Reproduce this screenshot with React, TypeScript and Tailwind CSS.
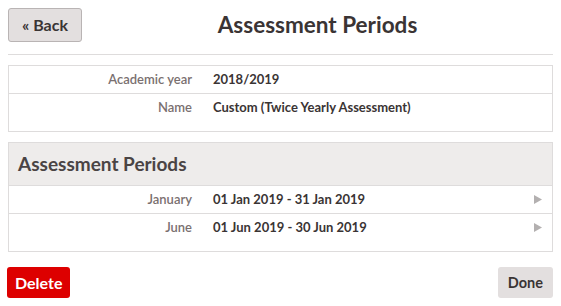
import type { ReactNode } from 'react';

type Row = { label: string; value: string; link?: boolean };

const details: Row[] = [
  { label: 'Academic year', value: '2018/2019' },
  { label: 'Name', value: 'Custom (Twice Yearly Assessment)' },
];

const periods: Row[] = [
  { label: 'January', value: '01 Jan 2019 - 31 Jan 2019', link: true },
  { label: 'June', value: '01 Jun 2019 - 30 Jun 2019', link: true },
];

function Arrow() {
  return (
    <svg width="8" height="9" viewBox="0 0 8 9" className="shrink-0">
      <path d="M0 0 L8 4.5 L0 9 Z" fill="#b3b0b0" />
    </svg>
  );
}

function DataRow({ row, last }: { row: Row; last?: boolean }) {
  return (
    <div
      className={`flex items-start pr-[10px] ${last ? 'h-[37px]' : 'h-[28px] border-b border-[#dedcdc]'}`}
    >
      <div className="w-[183px] shrink-0 pt-[4px] text-right text-[13px] font-semibold text-[#7a7070]">
        {row.label}
      </div>
      <div className="flex-1 pl-[21px] pt-[4px] text-[13px] font-bold text-[#3a3434]">
        {row.value}
      </div>
      {row.link && (
        <div className="pt-[9px]">
          <Arrow />
        </div>
      )}
    </div>
  );
}

function Box({ children }: { children: ReactNode }) {
  return <div className="border border-[#dedcdc] bg-white">{children}</div>;
}

export default function App() {
  return (
    <div
      className="w-[561px] h-[306px] bg-white px-[8px] pt-[8px] text-[#3a3434]"
      style={{ fontFamily: 'Lato, "Open Sans", sans-serif' }}
    >
      <div className="flex items-center h-[34px]">
        <button className="h-[34px] w-[74px] rounded-[3px] border border-[#b9b4b4] bg-[#e3dfdf] text-[16px] font-bold text-[#3a3434]">
          « Back
        </button>
        <h1 className="flex-1 text-center text-[22.5px] font-bold text-[#3a3434]">
          Assessment Periods
        </h1>
      </div>
      <div className="mt-[12px] border-b border-[#dedcdc]" />

      <div className="mt-[10px]">
        <Box>
          {details.map((r, i) => (
            <DataRow key={r.label} row={r} last={i === details.length - 1} />
          ))}
        </Box>
      </div>

      <div className="mt-[10px]">
        <Box>
          <div className="h-[43px] border-b border-[#dedcdc] bg-[#eeeceb] pl-[9px] pt-[7px] text-[19px] font-bold text-[#4a4444]">
            Assessment Periods
          </div>
          {periods.map((r, i) => (
            <DataRow key={r.label} row={r} last={i === periods.length - 1} />
          ))}
        </Box>
      </div>

      <div className="mt-[15px] flex justify-between">
        <button className="h-[31px] -ml-px rounded-[3px] bg-[#dd0000] px-[8px] text-[16px] font-bold text-white">
          Delete
        </button>
        <button className="h-[31px] rounded-[3px] bg-[#e3dfdf] px-[10px] text-[14.5px] font-bold text-[#3a3434]">
          Done
        </button>
      </div>
    </div>
  );
}
